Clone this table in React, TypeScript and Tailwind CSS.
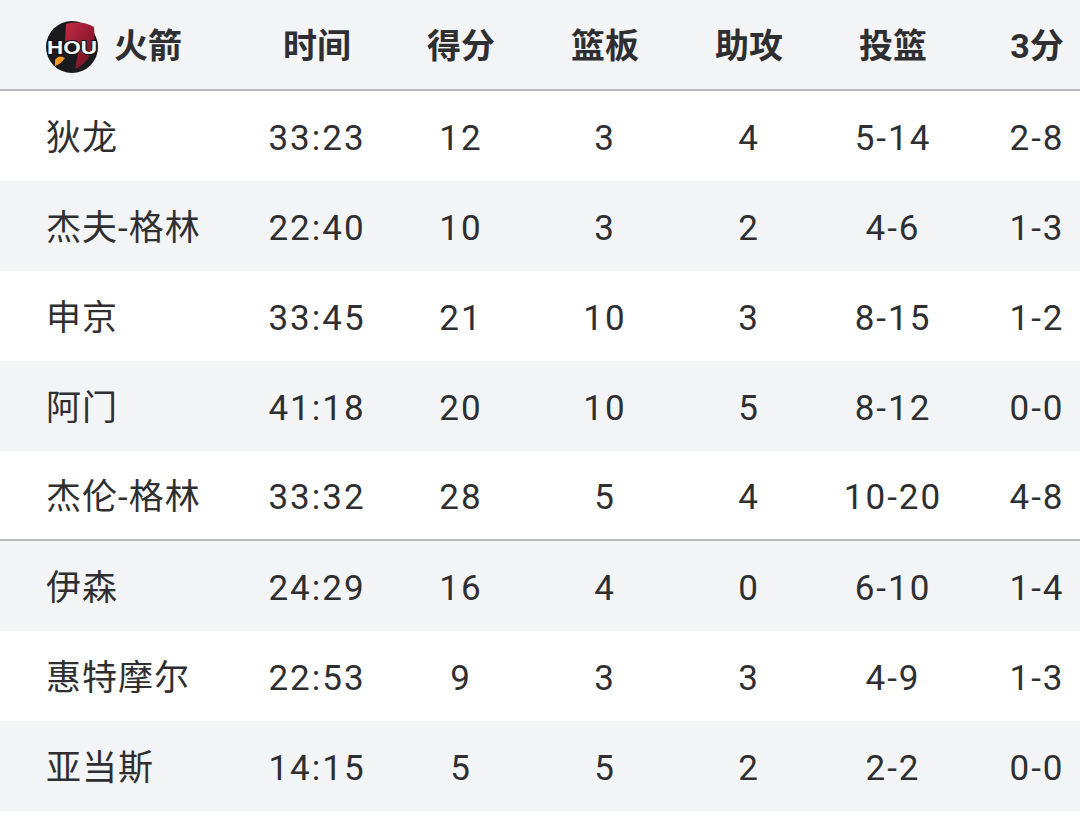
import React from "react";

const FONT = { fontFamily: 'Roboto, "Noto Sans CJK SC", sans-serif' };

const COLS = ["时间", "得分", "篮板", "助攻", "投篮", "3分"];

const ROWS: [string, string, string, string, string, string, string][] = [
  ["狄龙", "33:23", "12", "3", "4", "5-14", "2-8"],
  ["杰夫-格林", "22:40", "10", "3", "2", "4-6", "1-3"],
  ["申京", "33:45", "21", "10", "3", "8-15", "1-2"],
  ["阿门", "41:18", "20", "10", "5", "8-12", "0-0"],
  ["杰伦-格林", "33:32", "28", "5", "4", "10-20", "4-8"],
  ["伊森", "24:29", "16", "4", "0", "6-10", "1-4"],
  ["惠特摩尔", "22:53", "9", "3", "3", "4-9", "1-3"],
  ["亚当斯", "14:15", "5", "5", "2", "2-2", "0-0"],
];

function HouLogo() {
  return (
    <svg width="56" height="56" viewBox="0 0 56 56" className="shrink-0">
      <defs>
        <linearGradient id="rg" x1="0" y1="0" x2="1" y2="1">
          <stop offset="0" stopColor="#c42a43" />
          <stop offset="1" stopColor="#6b0f22" />
        </linearGradient>
      </defs>
      <circle cx="28" cy="28" r="26" fill="#1b1b1d" />
      <path d="M22 5 Q38 1 50 8 Q52 22 46 36 Q41 46 31 50 L35 30 Q29 24 21 22 Z" fill="url(#rg)" />
      <path d="M11 41 Q15 35 21 39 Q17 45 11 47 Z" fill="#f29a1f" />
      <text
        x="28"
        y="35"
        textAnchor="middle"
        fontFamily="'Liberation Sans', Arial, sans-serif"
        fontWeight="900"
        fontSize="19"
        fill="#ffffff"
        stroke="#111"
        strokeWidth="1.8"
        paintOrder="stroke"
        textLength="50"
        lengthAdjust="spacingAndGlyphs"
      >
        HOU
      </text>
    </svg>
  );
}

export default function App() {
  return (
    <div className="w-[1080px] h-[829px] overflow-hidden bg-white text-[#2f2f31]" style={FONT}>
      <div className="w-[1109px]">
        {/* header */}
        <div className="flex h-[91px] items-center bg-[#f3f4f6] border-b-2 border-[#b9b9bb]">
          <div className="w-[245px] pl-[44px] flex items-center gap-[14px] pt-[4px]">
            <HouLogo />
            <span className="text-[34px] font-bold">火箭</span>
          </div>
          {COLS.map((c) => (
            <div key={c} className="w-[144px] text-center text-[34px] font-bold pt-[4px]">
              {c}
            </div>
          ))}
        </div>
        {ROWS.map((r, i) => (
          <div
            key={r[0]}
            className={
              "flex items-center pt-[7px] " +
              (i === 4 ? "h-[90px] border-b-2 border-[#b9b9bb] " : "h-[90px] ") +
              (i % 2 === 1 ? "bg-[#f3f4f6]" : "bg-white")
            }
          >
            <div className="w-[245px] pl-[46px] text-[35px] tracking-[1px]">{r[0]}</div>
            {r.slice(1).map((v, j) => (
              <div key={j} className="w-[144px] text-center text-[35px] tracking-[2px]">
                {v}
              </div>
            ))}
          </div>
        ))}
      </div>
    </div>
  );
}
